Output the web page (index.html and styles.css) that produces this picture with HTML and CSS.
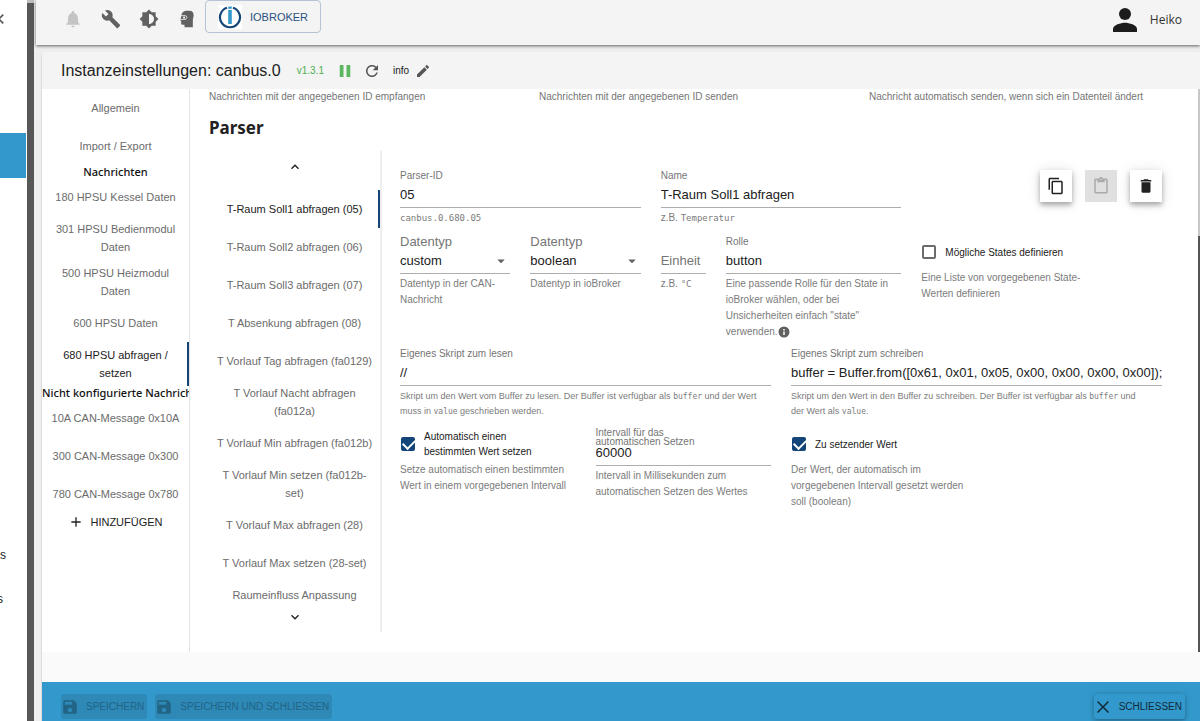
FILE: index.html
```html
<!DOCTYPE html>
<html lang="de">
<head>
<meta charset="utf-8">
<meta name="viewport" content="width=device-width, initial-scale=1">
<title>Instanzeinstellungen: canbus.0</title>
<link rel="stylesheet" href="styles.css">
</head>
<body>
<div class="app">
  <aside class="drawer" aria-label="Navigation">
    <button class="drawer-toggle" aria-label="Menü einklappen"><svg viewBox="0 0 24 24"><path d="M15.4 7.4 14 6l-6 6 6 6 1.4-1.4L10.8 12z"/></svg></button>
    <div class="drawer-active"></div>
    <div class="drawer-end"><a href="#" class="drawer-link">s</a><a href="#" class="drawer-link cut">s</a></div>
  </aside>
  <div class="divider"></div>
  <div class="workspace">
    <header class="topbar">
      <nav class="tools">
        <button class="icon-btn muted" aria-label="Benachrichtigungen"><svg viewBox="0 0 24 24"><path d="M12 22c1.1 0 2-.9 2-2h-4c0 1.1.9 2 2 2zm6-6v-5c0-3.07-1.64-5.64-4.5-6.32V4c0-.83-.67-1.5-1.5-1.5s-1.5.67-1.5 1.5v.68C7.63 5.36 6 7.92 6 11v5l-2 2v1h16v-1l-2-2z"/></svg></button>
        <button class="icon-btn" aria-label="Systemeinstellungen"><svg viewBox="0 0 24 24"><path d="M22.7 19l-9.1-9.1c.9-2.3.4-5-1.5-6.9-2-2-5-2.4-7.4-1.3L9 6 6 9 1.6 4.7C.4 7.1.9 10.1 2.9 12.1c1.9 1.9 4.6 2.4 6.9 1.5l9.1 9.1c.4.4 1 .4 1.4 0l2.3-2.3c.5-.4.5-1.1.1-1.4z"/></svg></button>
        <button class="icon-btn" aria-label="Farbthema"><svg viewBox="0 0 24 24"><path d="M20 8.69V4h-4.69L12 .69 8.69 4H4v4.69L.69 12 4 15.31V20h4.69L12 23.31 15.31 20H20v-4.69L23.31 12 20 8.69zM12 18V6c3.31 0 6 2.69 6 6s-2.69 6-6 6z"/></svg></button>
        <button class="icon-btn" aria-label="Expertenmodus"><svg viewBox="0 0 24 24"><path d="M11 2h4c3.500 0 5 2 5 5.500 0 2.500-1 3.500-1 6V22H9v-3H7c-1.200 0-2-.8-2-2v-3H4l1-5c.5-4.500 2.500-7 6-7z"/><path d="M4 8h6.500l1.500 2-1.500 2.500H4" fill="none" stroke="#f4f4f4" stroke-width="1"/><circle cx="8.500" cy="10.300" r="1.300" fill="#f4f4f4"/></svg></button>
      </nav>
      <button class="host-btn">
        <svg viewBox="0 0 24 24"><rect width="24" height="24" fill="#fff"/><path d="M9 2.700A10 10 0 1 0 15 2.700" fill="none" stroke="#144578" stroke-width="2.200"/><path d="M12 1.500v2.200M12 5v14" stroke="#3399cc" stroke-width="3.600"/></svg>
        <span>IOBROKER</span>
      </button>
      <div class="user"><svg viewBox="0 0 24 24"><circle cx="12" cy="6" r="6"/><path d="M0 24v-3c0-4 8-6.200 12-6.200S24 17 24 21v3z"/></svg><span>Heiko</span></div>
    </header>

    <main class="card">
      <div class="card-head">
        <h1>Instanzeinstellungen: canbus.0</h1>
        <span class="version">v1.3.1</span>
        <button class="head-btn green" aria-label="Pause"><svg viewBox="0 0 24 24"><path d="M5 4h5v16H5zM14 4h5v16h-5z"/></svg></button>
        <button class="head-btn" aria-label="Neu starten"><svg viewBox="0 0 24 24"><path d="M17.65 6.35C16.2 4.9 14.21 4 12 4c-4.42 0-7.99 3.58-7.99 8s3.570 8 7.990 8c3.730 0 6.840-2.550 7.730-6h-2.080c-.82 2.330-3.040 4-5.650 4-3.310 0-6-2.690-6-6s2.690-6 6-6c1.660 0 3.140.69 4.220 1.780L13 11h7V4l-2.350 2.350z"/></svg></button>
        <span class="level">info</span>
        <button class="head-btn small" aria-label="Loglevel bearbeiten"><svg viewBox="0 0 24 24"><path d="M3 17.250V21h3.750L17.810 9.940l-3.750-3.750L3 17.250zM20.710 7.040c.39-.39.39-1.020 0-1.410l-2.340-2.340c-.39-.39-1.020-.39-1.410 0l-1.830 1.830 3.750 3.750 1.830-1.830z"/></svg></button>
      </div>

      <div class="card-body">
        <nav class="tabs">
          <button class="tab">Allgemein</button>
          <button class="tab">Import / Export</button>
          <h2 class="tab-title strong">Nachrichten</h2>
          <button class="tab">180 HPSU Kessel Daten</button>
          <button class="tab">301 HPSU Bedienmodul Daten</button>
          <button class="tab">500 HPSU Heizmodul Daten</button>
          <button class="tab">600 HPSU Daten</button>
          <button class="tab active">680 HPSU abfragen / setzen</button>
          <h2 class="tab-title">Nicht konfigurierte Nachrichten</h2>
          <button class="tab">10A CAN-Message 0x10A</button>
          <button class="tab">300 CAN-Message 0x300</button>
          <button class="tab">780 CAN-Message 0x780</button>
          <button class="add"><svg viewBox="0 0 24 24"><path d="M19 13h-6v6h-2v-6H5v-2h6V5h2v6h6v2z"/></svg>HINZUFÜGEN</button>
        </nav>

        <div class="content">
          <div class="hints">
            <span>Nachrichten mit der angegebenen ID empfangen</span>
            <span>Nachrichten mit der angegebenen ID senden</span>
            <span>Nachricht automatisch senden, wenn sich ein Datenteil ändert</span>
          </div>
          <h2 class="section">Parser</h2>
          <div class="parser">
            <nav class="parser-tabs">
              <button class="scroll" aria-label="Nach oben"><svg viewBox="0 0 24 24"><path d="M7.410 15.410 12 10.830l4.590 4.580L18 14l-6-6-6 6z"/></svg></button>
              <div class="parser-list">
                <button class="tab active">T-Raum Soll1 abfragen (05)</button>
                <button class="tab">T-Raum Soll2 abfragen (06)</button>
                <button class="tab">T-Raum Soll3 abfragen (07)</button>
                <button class="tab">T Absenkung abfragen (08)</button>
                <button class="tab">T Vorlauf Tag abfragen (fa0129)</button>
                <button class="tab">T Vorlauf Nacht abfragen (fa012a)</button>
                <button class="tab">T Vorlauf Min abfragen (fa012b)</button>
                <button class="tab">T Vorlauf Min setzen (fa012b-set)</button>
                <button class="tab">T Vorlauf Max abfragen (28)</button>
                <button class="tab">T Vorlauf Max setzen (28-set)</button>
                <button class="tab last">Raumeinfluss Anpassung</button>
              </div>
              <button class="scroll" aria-label="Nach unten"><svg viewBox="0 0 24 24"><path d="M7.410 8.590 12 13.170l4.590-4.580L18 10l-6 6-6-6z"/></svg></button>
            </nav>

            <form class="form">
              <div class="row row-id">
                <div class="field w4"><label for="pid">Parser-ID</label><input id="pid" value="05"><p><code>canbus.0.680.05</code></p></div>
                <div class="field w4"><label for="name">Name</label><input id="name" value="T-Raum Soll1 abfragen"><p>z.B. <code>Temperatur</code></p></div>
                <div class="actions w4">
                  <button type="button" aria-label="Kopieren"><svg viewBox="0 0 24 24"><path d="M16 1H4c-1.100 0-2 .9-2 2v14h2V3h12V1zm3 4H8c-1.100 0-2 .9-2 2v14c0 1.100.9 2 2 2h11c1.100 0 2-.9 2-2V7c0-1.100-.9-2-2-2zm0 16H8V7h11v14z"/></svg></button>
                  <button type="button" disabled aria-label="Einfügen"><svg viewBox="0 0 24 24"><path d="M19 2h-4.180C14.400.84 13.300 0 12 0S9.600.84 9.180 2H5c-1.100 0-2 .9-2 2v16c0 1.100.9 2 2 2h14c1.100 0 2-.9 2-2V4c0-1.100-.9-2-2-2zm-7 0c.55 0 1 .45 1 1s-.45 1-1 1-1-.45-1-1 .45-1 1-1zm7 18H5V4h2v3h10V4h2v16z"/></svg></button>
                  <button type="button" aria-label="Löschen"><svg viewBox="0 0 24 24"><path d="M6 19c0 1.100.9 2 2 2h8c1.100 0 2-.9 2-2V7H6v12zM19 4h-3.500l-1-1h-5l-1 1H5v2h14V4z"/></svg></button>
                </div>
              </div>

              <div class="row row-type">
                <div class="field w2 large"><label for="t1">Datentyp</label><div class="select"><select id="t1"><option>custom</option></select><svg viewBox="0 0 24 24"><path d="m7 10 5 5 5-5z"/></svg></div><p>Datentyp in der CAN-Nachricht</p></div>
                <div class="field w2 large"><label for="t2">Datentyp</label><div class="select"><select id="t2"><option>boolean</option></select><svg viewBox="0 0 24 24"><path d="m7 10 5 5 5-5z"/></svg></div><p>Datentyp in ioBroker</p></div>
                <div class="field w1"><span class="label-space"></span><input id="unit" placeholder="Einheit" aria-label="Einheit"><p>z.B. <code>°C</code></p></div>
                <div class="field w3"><label for="role">Rolle</label><input id="role" value="button"><p>Eine passende Rolle für den State in ioBroker wählen, oder bei Unsicherheiten einfach "state" verwenden.<svg class="info" viewBox="0 0 24 24"><path d="M12 1a11 11 0 1 0 0 22 11 11 0 0 0 0-22zm1.500 17h-3v-7h3zm0-9h-3V6h3z"/></svg></p></div>
                <div class="check w3"><label><input type="checkbox"><span>Mögliche States definieren</span></label><p>Eine Liste von vorgegebenen State-Werten definieren</p></div>
              </div>

              <div class="row row-script">
                <div class="field w6"><label for="rd">Eigenes Skript zum lesen</label><input id="rd" value="//"><p class="fine">Skript um den Wert vom Buffer zu lesen. Der Buffer ist verfügbar als <code>buffer</code> und der Wert muss in <code>value</code> geschrieben werden.</p></div>
                <div class="field w6"><label for="wr">Eigenes Skript zum schreiben</label><input id="wr" value="buffer = Buffer.from([0x61, 0x01, 0x05, 0x00, 0x00, 0x00, 0x00]);"><p class="fine">Skript um den Wert in den Buffer zu schreiben. Der Buffer ist verfügbar als <code>buffer</code> und der Wert als <code>value</code>.</p></div>
              </div>

              <div class="row">
                <div class="check w3"><label><input type="checkbox" checked><span>Automatisch einen bestimmten Wert setzen</span></label><p>Setze automatisch einen bestimmten Wert in einem vorgegebenen Intervall</p></div>
                <div class="field w3"><label for="iv" class="tight">Intervall für das automatischen Setzen</label><input id="iv" value="60000"><p>Intervall in Millisekunden zum automatischen Setzen des Wertes</p></div>
                <div class="check w3"><label><input type="checkbox" checked><span>Zu setzender Wert</span></label><p>Der Wert, der automatisch im vorgegebenen Intervall gesetzt werden soll (boolean)</p></div>
              </div>
            </form>
          </div>
        </div>
        <div class="scrollbar"><div class="thumb"></div></div>
      </div>

      <footer class="footer">
        <button class="foot-btn" disabled><svg viewBox="0 0 24 24"><path d="M17 3H5c-1.110 0-2 .9-2 2v14c0 1.100.89 2 2 2h14c1.100 0 2-.9 2-2V7l-4-4zm-5 16c-1.660 0-3-1.340-3-3s1.340-3 3-3 3 1.340 3 3-1.340 3-3 3zm3-10H5V5h10v4z"/></svg>SPEICHERN</button>
        <button class="foot-btn" disabled><svg viewBox="0 0 24 24"><path d="M17 3H5c-1.110 0-2 .9-2 2v14c0 1.100.89 2 2 2h14c1.100 0 2-.9 2-2V7l-4-4zm-5 16c-1.660 0-3-1.340-3-3s1.340-3 3-3 3 1.340 3 3-1.340 3-3 3zm3-10H5V5h10v4z"/></svg>SPEICHERN UND SCHLIESSEN</button>
        <button class="foot-btn close"><svg viewBox="0 0 24 24"><path d="M20 5.400 18.600 4 12 10.600 5.400 4 4 5.400 10.600 12 4 18.600 5.400 20 12 13.400 18.600 20 20 18.600 13.400 12z"/></svg>SCHLIESSEN</button>
      </footer>
    </main>
  </div>
</div>
</body>
</html>
```
FILE: styles.css
```css
* { box-sizing: border-box; }
body { margin: 0; background: #fff; color: #212121; font: 11px/18px "Liberation Sans", Arial, sans-serif; }
h1, h2, p { margin: 0; font-weight: 400; }
button { border: 0; padding: 0; background: none; color: inherit; font: inherit; }
svg { display: block; flex: none; fill: currentColor; }
code { font: 9px "DejaVu Sans Mono", monospace; }

.app { display: flex; min-height: 100vh; }

.drawer { width: 27px; flex: none; display: flex; flex-direction: column; overflow: hidden; }
.drawer-toggle { height: 38px; margin-left: -9px; align-self: flex-start; color: #555; }
.drawer-toggle svg { width: 20px; height: 20px; }
.drawer-active { height: 45px; margin-top: 95px; margin-right: 1px; background: #3399cc; }
.drawer-end { display: flex; flex-direction: column; gap: 26px; margin-top: 368px; }
.drawer-link { color: #212121; font-size: 12px; line-height: 18px; text-decoration: none; }
.drawer-link.cut { margin-left: -3px; }
.divider { width: 7px; flex: none; background: #575757; border-top: 3px solid #bdbdbd; }

.workspace { flex: 1; min-width: 0; display: flex; flex-direction: column; padding-left: 2px; background: #eee; }
.topbar { height: 45px; flex: none; display: flex; align-items: flex-start; padding: 0 18px 0 27px; background: #f4f4f4; box-shadow: 0 1px 3px rgba(0,0,0,.6); }
.tools { display: flex; gap: 18px; padding-top: 9px; color: #616161; }
.icon-btn svg { width: 20px; height: 20px; }
.icon-btn.muted { color: #c4c4c4; }
.host-btn { height: 33px; margin-left: 8px; padding: 0 12px 0 12px; display: flex; align-items: center; gap: 8px; border: 1px solid #b4c3d5; border-radius: 4px; color: #2a5180; }
.host-btn svg { width: 24px; height: 24px; }
.user { margin-left: auto; display: flex; align-items: center; gap: 13px; padding-top: 8px; font: 12px/24px "Open Sans", sans-serif; color: #333; }
.user svg { width: 24px; height: 24px; color: #1c1c1c; }

.card { flex: 1; display: flex; flex-direction: column; margin: 7px 0 0 5px; border-left: 1px solid #ddd; border-radius: 4px 0 0 0; background: #fafafa; }
.card-head { height: 37px; flex: none; display: flex; align-items: center; padding-left: 19px; background: #f4f4f4; border-radius: 4px 0 0 0; }
.card-head h1 { font-size: 16px; line-height: 24px; }
.version { margin-left: 16px; font-size: 10px; color: #4caf50; }
.head-btn { margin-left: 12px; color: #555; }
.head-btn svg { width: 18px; height: 18px; }
.head-btn.green { color: #5cb860; }
.head-btn.small { margin-left: 6px; }
.head-btn.small svg { width: 16px; height: 16px; }
.level { margin-left: 12px; font-size: 10px; }
.card-head .head-btn + .head-btn { margin-left: 9px; }

.card-body { flex: 1; display: flex; background: #fff; }
.tabs { width: 148px; flex: none; display: flex; flex-direction: column; border-right: 1px solid #e3e3e3; overflow: hidden; }
.tab { display: block; width: 100%; min-height: 38px; padding: 4px 7px; color: #6b6b6b; text-align: center; line-height: 18px; flex: none; }
.tab.active { color: #222; box-shadow: inset -2px 0 #144578; }
.tab.last { padding-bottom: 22px; }
.tab-title { height: 13px; font: 500 11px/13px "Noto Sans", sans-serif; text-align: left; white-space: nowrap; color: #111; }
.tab-title.strong { text-align: center; }
.add { display: flex; align-items: center; justify-content: center; gap: 6px; color: #222; }
.add svg { width: 16px; height: 16px; }

.content { flex: 1; min-width: 0; padding: 0 19px 20px; }
.hints { display: grid; grid-template-columns: repeat(3, 1fr); gap: 20px; font-size: 10px; line-height: 15px; color: #757575; }
.section { margin: 12px 0; font: bold 17px/23px "Noto Sans", sans-serif; }
.parser { display: flex; min-height: 481px; }
.parser-tabs { width: 173px; flex: none; border-right: 2px solid #eee; }
.parser-list { height: 412px; overflow: hidden; }
.scroll { display: flex; width: 100%; height: 30px; align-items: center; justify-content: center; }
.scroll:first-child { height: 39px; padding-bottom: 7px; }
.scroll svg { width: 16px; height: 16px; }

.form { flex: 1; min-width: 0; padding: 19px 17px 0 18px; }
.row { display: grid; grid-template-columns: repeat(12, minmax(0, 1fr)); column-gap: 20px; align-items: start; }
.row-id { min-height: 66px; }
.row-type { min-height: 112px; }
.row-script { min-height: 80px; }
.w1 { grid-column: span 1; }
.w2 { grid-column: span 2; }
.w3 { grid-column: span 3; }
.w4 { grid-column: span 4; }
.w6 { grid-column: span 6; }

.field > label, .label-space { display: block; height: 12px; font-size: 10px; line-height: 12px; color: #757575; white-space: nowrap; }
.field > label.tight { padding-right: 50px; line-height: 9px; white-space: normal; }
.large > label { font-size: 13px; }
.field input, .select select { display: block; width: 100%; height: 26px; padding: 0; border: 0; border-bottom: 1px solid #adadad; border-radius: 0; background: none; outline: 0; appearance: none; color: #212121; font: 13px "Liberation Sans", Arial, sans-serif; }
.field input::placeholder { color: #757575; opacity: 1; }
.select { display: grid; align-items: center; }
.select > * { grid-area: 1 / 1; }
.select svg { width: 18px; height: 18px; justify-self: end; color: #616161; pointer-events: none; }
.field p, .check p { padding-top: 2px; font-size: 10px; line-height: 16px; color: #7b7b7b; }
.field p.fine { padding: 3px 12px 0 0; font-size: 9px; line-height: 15px; }
.fine code { font-size: 8px; }
.info { display: inline-block; width: 12px; height: 12px; vertical-align: -3px; color: #616161; }

.check label { display: flex; align-items: center; gap: 9px; min-height: 32px; padding-right: 20px; font-size: 10px; line-height: 15px; color: #212121; }
.check input { appearance: none; width: 14px; height: 14px; margin: 0 0 0 1px; flex: none; border: 2px solid #6b6b6b; border-radius: 2px; display: grid; place-items: center; }
.check input:checked { border-color: #144578; background: #144578; }
.check input:checked::after { content: ""; width: 10px; height: 6px; margin-bottom: 3px; border: solid #fff; border-width: 0 0 2px 2px; transform: rotate(-45deg); }

.actions { display: flex; justify-content: flex-end; gap: 13px; }
.actions button { width: 32px; height: 32px; display: grid; place-items: center; background: #fff; box-shadow: 0 3px 5px rgba(0,0,0,.3), 0 1px 14px rgba(0,0,0,.12); }
.actions button:disabled { background: #e0e0e0; color: #aaa; box-shadow: none; }
.actions svg { width: 18px; height: 18px; }

.scrollbar { width: 2px; flex: none; padding-top: 147px; background: #c8c8c8; display: flex; }
.thumb { flex: 1; background: #555; }

.footer { height: 39px; flex: none; display: flex; align-items: flex-start; gap: 8px; margin-top: 30px; padding: 12px 15px 0 19px; background: #3399cc; }
.foot-btn { height: 25px; display: flex; align-items: center; gap: 7px; padding-right: 3px; border-radius: 3px; background: #2e89b7; color: #216485; font-size: 10px; white-space: nowrap; }
.foot-btn svg { width: 18px; height: 18px; }
.foot-btn.close { margin-left: auto; background: #3399cc; color: #122b38; box-shadow: 0 2px 4px rgba(0,0,0,.25), 0 0 8px rgba(0,0,0,.12); }
```
